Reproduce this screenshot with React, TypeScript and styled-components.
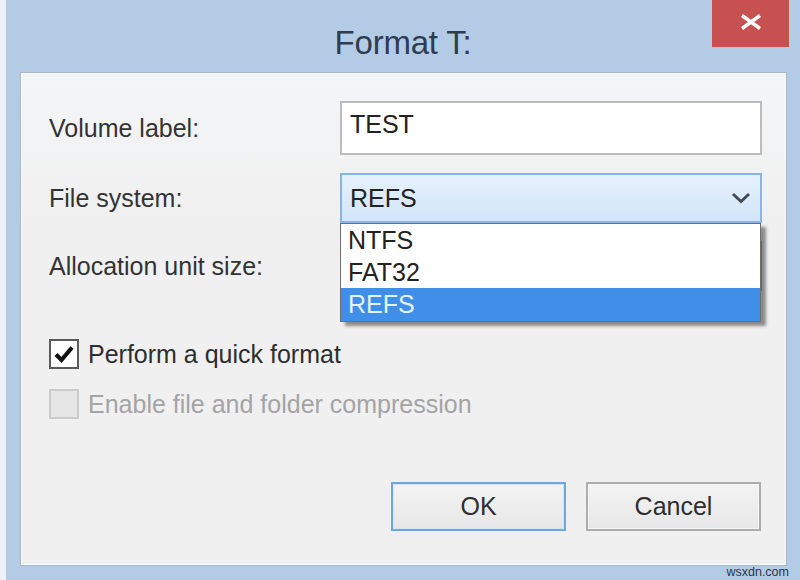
import React from "react";
import styled, { createGlobalStyle } from "styled-components";

const Global = createGlobalStyle`
  html, body { margin: 0; padding: 0; background: #b4cbe6; }
  * { box-sizing: border-box; }
`;

const Window = styled.div`
  position: relative;
  width: 800px;
  height: 580px;
  display: flex;
  flex-direction: column;
  background: #b4cbe6;
  border-left: 6px solid #eef2f8;
  font-family: "Liberation Sans", Arial, sans-serif;
  color: #383838;
  overflow: hidden;
`;

const TitleBar = styled.div`
  height: 72px;
  flex: none;
  display: grid;
  grid-template-columns: 1fr auto 1fr;
  align-items: start;
`;

const Title = styled.div`
  margin-top: 26px;
  font-size: 33px;
  line-height: 33px;
  color: #2e3e50;
  letter-spacing: -0.2px;
`;

const CloseButton = styled.div`
  justify-self: end;
  margin-right: 11px;
  width: 77px;
  height: 47px;
  background: #c75050;
  display: flex;
  align-items: center;
  justify-content: center;
  padding-bottom: 3px;
`;

const Panel = styled.div`
  flex: 1;
  margin: 0 13px 14px 14px;
  padding: 28px 24px 34px 28px;
  background: linear-gradient(#f4f5f7, #f0f0f0 30%, #f0f0f0);
  border: 1px solid #a6b8cd;
  box-shadow: inset 0 0 0 1px #f9fbfd;
  display: flex;
  flex-direction: column;
`;

const FormGrid = styled.div`
  display: grid;
  grid-template-columns: 291px 1fr;
  row-gap: 18px;
  align-items: center;
`;

const Label = styled.div`
  font-size: 25px;
  color: #333;
`;

const TextBox = styled.div`
  height: 54px;
  background: #fff;
  border: 2px solid #bcbcbc;
  padding: 0 0 8px 8px;
  display: flex;
  align-items: center;
  font-size: 25px;
  color: #222;
`;

const ComboWrap = styled.div`
  position: relative;
  z-index: ${(p: { $top?: boolean }) => (p.$top ? 2 : 1)};
`;

const Combo = styled.div`
  height: 50px;
  border: 2px solid #86b6e6;
  background: linear-gradient(#e6f1fc, #d2e5f8);
  padding: 0 9px 0 8px;
  display: flex;
  align-items: center;
  justify-content: space-between;
  font-size: 25px;
  color: #222;
`;

const DropList = styled.div`
  position: absolute;
  top: 100%;
  left: 0;
  right: 1px;
  background: #fff;
  border: 1px solid #6f6f6f;
  box-shadow: 5px 4px 3px rgba(0, 0, 0, 0.42);
  display: flex;
  flex-direction: column;
`;

const DropItem = styled.div<{ $selected?: boolean }>`
  height: ${(p) => (p.$selected ? 33 : 32)}px;
  padding: 0 0 0 7px;
  display: flex;
  align-items: center;
  font-size: 25px;
  line-height: 1;
  background: ${(p) => (p.$selected ? "#3f8fe9" : "transparent")};
  color: ${(p) => (p.$selected ? "#e4f1ff" : "#222")};
`;

const Checks = styled.div`
  margin-top: 48px;
  display: flex;
  flex-direction: column;
  gap: 20px;
`;

const CheckRow = styled.div<{ $disabled?: boolean }>`
  display: flex;
  align-items: center;
  gap: 9px;
  height: 30px;
  font-size: 25px;
  color: ${(p) => (p.$disabled ? "#a4a4a4" : "#2e2e2e")};
`;

const Box = styled.div<{ $disabled?: boolean }>`
  width: 30px;
  height: 30px;
  flex: none;
  border: 2px solid ${(p) => (p.$disabled ? "#cdcdcd" : "#5a5a5a")};
  background: ${(p) => (p.$disabled ? "#e6e6e6" : "#fff")};
  display: flex;
  align-items: center;
  justify-content: center;
`;

const Buttons = styled.div`
  margin-top: auto;
  display: flex;
  justify-content: flex-end;
  gap: 20px;
  padding-right: 1px;
`;

const Button = styled.div<{ $default?: boolean }>`
  width: 175px;
  height: 49px;
  border: 2px solid ${(p) => (p.$default ? "#6ea6e0" : "#adadad")};
  background: linear-gradient(#f3f3f3, #e7e7e7);
  box-shadow: inset 0 0 0 1px ${(p) => (p.$default ? "#d3e6f8" : "#f6f6f6")};
  display: flex;
  align-items: center;
  justify-content: center;
  font-size: 25px;
  color: #2e2e2e;
`;

const Watermark = styled.div`
  position: absolute;
  right: 11px;
  bottom: 1px;
  font-size: 12.5px;
  line-height: 13px;
  color: #2a3647;
`;

export default function App() {
  return (
    <>
      <Global />
      <Window>
        <TitleBar>
          <span />
          <Title>Format T:</Title>
          <CloseButton>
            <svg width="22" height="16" viewBox="0 0 22 16">
              <path d="M2 1.5 L20 14.5 M20 1.5 L2 14.5" stroke="#fff" strokeWidth="3.4" strokeLinecap="butt" />
            </svg>
          </CloseButton>
        </TitleBar>
        <Panel>
          <FormGrid>
            <Label>Volume label:</Label>
            <TextBox>TEST</TextBox>
            <Label>File system:</Label>
            <ComboWrap $top>
              <Combo>
                <span>REFS</span>
                <svg width="20" height="12" viewBox="0 0 20 12">
                  <path d="M2 2 L10 9.5 L18 2" fill="none" stroke="#434c57" strokeWidth="3" />
                </svg>
              </Combo>
              <DropList>
                <DropItem>NTFS</DropItem>
                <DropItem>FAT32</DropItem>
                <DropItem $selected>REFS</DropItem>
              </DropList>
            </ComboWrap>
            <Label>Allocation unit size:</Label>
            <ComboWrap>
              <Combo />
            </ComboWrap>
          </FormGrid>
          <Checks>
            <CheckRow>
              <Box>
                <svg width="22" height="20" viewBox="0 0 22 20">
                  <path d="M3 10.5 L8.5 16 L19 3.5" fill="none" stroke="#111" strokeWidth="4.2" />
                </svg>
              </Box>
              Perform a quick format
            </CheckRow>
            <CheckRow $disabled>
              <Box $disabled />
              Enable file and folder compression
            </CheckRow>
          </Checks>
          <Buttons>
            <Button $default>OK</Button>
            <Button>Cancel</Button>
          </Buttons>
        </Panel>
        <Watermark>wsxdn.com</Watermark>
      </Window>
    </>
  );
}
